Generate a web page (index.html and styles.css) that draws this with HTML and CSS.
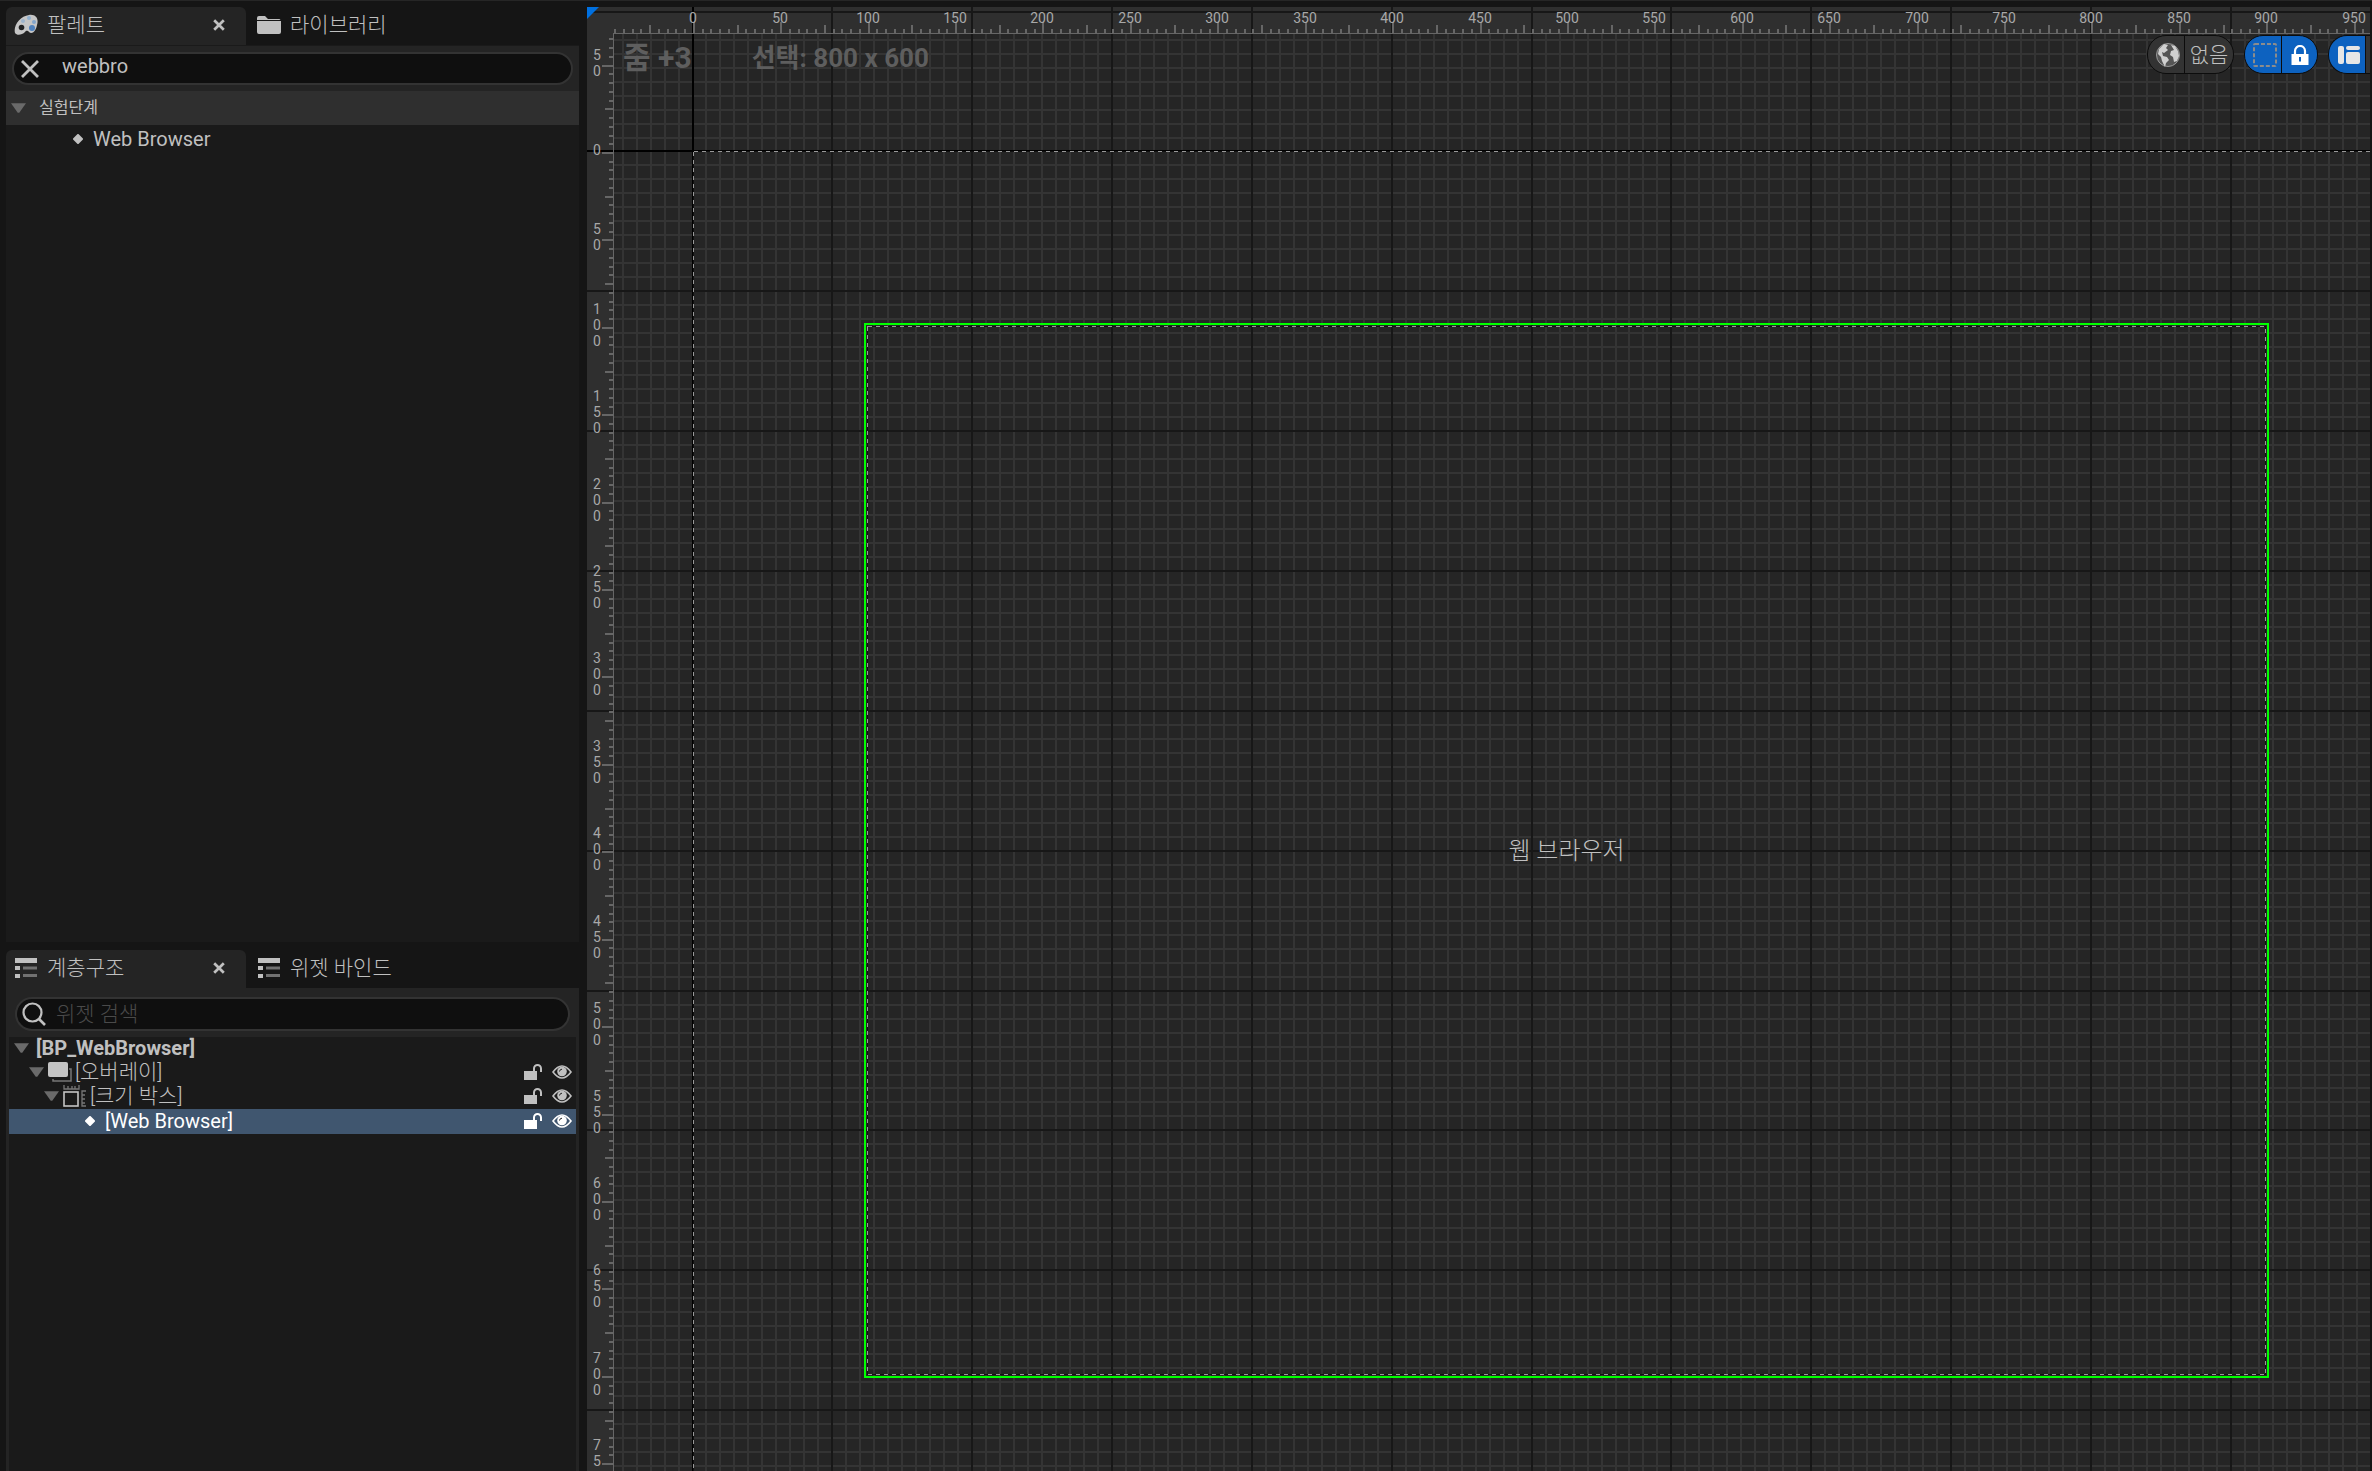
FILE: index.html
```html
<!DOCTYPE html>
<html lang="ko">
<head>
<meta charset="utf-8">
<title>BP_WebBrowser</title>
<link rel="stylesheet" href="styles.css">
</head>
<body>
<svg class="defs" aria-hidden="true">
  <symbol id="i-x" viewBox="0 0 20 20"><path d="M2 2L18 18M18 2L2 18" fill="none" stroke="currentColor" stroke-width="2.8"/></symbol>
  <symbol id="i-xb" viewBox="0 0 20 20"><path d="M2 2L18 18M18 2L2 18" fill="none" stroke="currentColor" stroke-width="4.5"/></symbol>
  <symbol id="i-tri" viewBox="0 0 16 10"><path d="M0 0H16L8.800 10H7.200Z" fill="#6a6a6a"/></symbol>
  <symbol id="i-dot" viewBox="0 0 10 10"><path d="M5 1L9 5L5 9L1 5Z" fill="currentColor" stroke="currentColor" stroke-width="2" stroke-linejoin="round"/></symbol>
  <symbol id="i-tree" viewBox="0 0 22 20"><path d="M0 0H22V5H0ZM0 8H5V12H0ZM0 16H5V20H0Z" fill="#c0c0c0"/><path d="M8 8.500H22V11.500H8ZM8 16H22V19H8Z" fill="#717171"/></symbol>
  <symbol id="i-unlock" viewBox="0 0 18 16"><path d="M0 7H13V16H0Z" fill="currentColor"/><path d="M10 8V4.500A3.500 3.500 0 0 1 17 4.500V8" fill="none" stroke="currentColor" stroke-width="2"/></symbol>
  <symbol id="i-eye" viewBox="0 0 20 14"><path d="M1 7Q10 -5 19 7Q10 19 1 7Z" fill="none" stroke="currentColor" stroke-width="1.600"/><circle cx="10" cy="6.500" r="4.800" fill="currentColor"/><path d="M7.500 6.500A2.600 2.600 0 0 1 10 4.200" fill="none" stroke="#222" stroke-width="1"/></symbol>
</svg>
<div class="editor">
  <aside class="side">
    <section class="panel palette">
      <div class="tabs">
        <div class="tab active">
          <svg class="ic" viewBox="0 0 24 22"><path d="M15 1C22 0 25 5 23 11C22 17 18 21 15 18C13 16 12 17 11 18C8 21 3 22 1 19C-1 12 6 2 15 1Z" fill="#c6c6c6"/><circle cx="7.500" cy="13.500" r="2.800" fill="#222"/><circle cx="18" cy="14" r="3" fill="#4f81bd"/><circle cx="20" cy="8" r="2" fill="#82a5cc"/><circle cx="15" cy="4" r="2" fill="#8fb0d0"/><circle cx="9" cy="7" r="2" fill="#9db4cc"/></svg>
          <span>팔레트</span>
          <button class="close" aria-label="닫기"><svg><use href="#i-xb"/></svg></button>
        </div>
        <div class="tab">
          <svg class="ic" viewBox="0 0 24 20"><path d="M0 3Q0 1 2 1H8L11 4H22Q23 4 23.500 5H0ZM0 6H24V17Q24 19 22 19H2Q0 19 0 17Z" fill="#c0c0c0"/></svg>
          <span>라이브러리</span>
        </div>
      </div>
      <div class="searchbar">
        <div class="search typed">
          <button class="clear" aria-label="지우기"><svg><use href="#i-x"/></svg></button>
          <input type="text" aria-label="팔레트 검색" value="webbro">
        </div>
      </div>
      <div class="category"><svg class="tri"><use href="#i-tri"/></svg><span>실험단계</span></div>
      <div class="item"><svg class="dot"><use href="#i-dot"/></svg><span>Web Browser</span></div>
    </section>
    <section class="panel hierarchy">
      <div class="tabs">
        <div class="tab active">
          <svg class="ic list"><use href="#i-tree"/></svg>
          <span>계층구조</span>
          <button class="close" aria-label="닫기"><svg><use href="#i-xb"/></svg></button>
        </div>
        <div class="tab">
          <svg class="ic list"><use href="#i-tree"/></svg>
          <span>위젯 바인드</span>
        </div>
      </div>
      <div class="searchbar">
        <div class="search">
          <svg class="glass" viewBox="0 0 24 24"><circle cx="10.500" cy="10.500" r="9" fill="none" stroke="#c0c0c0" stroke-width="2.200"/><path d="M17 17L23 23" stroke="#c0c0c0" stroke-width="2.600"/></svg>
          <input type="text" aria-label="위젯 검색" placeholder="위젯 검색">
        </div>
      </div>
      <div class="tree" role="tree">
        <div class="row root" role="treeitem"><svg class="tri"><use href="#i-tri"/></svg><span>[BP_WebBrowser]</span></div>
        <div class="row l1" role="treeitem"><svg class="tri"><use href="#i-tri"/></svg>
          <svg class="wic" viewBox="0 0 24 20"><path d="M21 7H23V19H5V17" fill="none" stroke="#777" stroke-width="1.500"/><rect width="20" height="15" rx="2" fill="#c4c4c4"/></svg>
          <span>[오버레이]</span>
          <button aria-label="잠금"><svg class="lock"><use href="#i-unlock"/></svg></button><button aria-label="표시"><svg class="eye"><use href="#i-eye"/></svg></button></div>
        <div class="row l2" role="treeitem"><svg class="tri"><use href="#i-tri"/></svg>
          <svg class="wic tall" viewBox="0 0 24 22"><path d="M1 0V4H16V0M5 1V4M9 1V4M12 1V4M23 6H19V21H23M19 10H22M19 14H22M19 18H22" fill="none" stroke="#777" stroke-width="1.300"/><rect x="1" y="7" width="14" height="14" fill="none" stroke="#c4c4c4" stroke-width="1.600"/></svg>
          <span>[크기 박스]</span>
          <button aria-label="잠금"><svg class="lock"><use href="#i-unlock"/></svg></button><button aria-label="표시"><svg class="eye"><use href="#i-eye"/></svg></button></div>
        <div class="row l3 selected" role="treeitem" aria-selected="true"><svg class="dot"><use href="#i-dot"/></svg>
          <span>[Web Browser]</span>
          <button aria-label="잠금"><svg class="lock"><use href="#i-unlock"/></svg></button><button aria-label="표시"><svg class="eye"><use href="#i-eye"/></svg></button></div>
      </div>
    </section>
  </aside>
  <main class="designer">
    <svg class="surface" id="surface"></svg>
    <div class="overlay">
      <div class="info"><span>줌 +3</span><span>선택: 800 x 600</span></div>
      <div class="tools">
        <div class="pill gray">
          <button aria-label="현지화"><svg width="24" height="26" viewBox="0 0 24 26"><circle cx="12" cy="13" r="11.500" fill="#555" stroke="#999"/><path d="M3 7L8 2L12 3L10 6L12 8L8 11L6 10L7 14L11 15L13 18L10 21L9 25L6 19L5 15L2 12ZM15 3L19 4L22 9L23 14L21 19L18 20L17 15L14 13L15 9L18 8Z" fill="#d0d0d0"/></svg></button>
          <button class="none">없음</button>
        </div>
        <div class="pill blue">
          <button aria-label="점선 표시"><svg width="24" height="24" viewBox="0 0 24 24"><rect x="1" y="1" width="22" height="22" rx="1" fill="none" stroke="#8c8c8c" stroke-width="2" stroke-dasharray="4 2"/></svg></button>
          <button aria-label="잠금 준수"><svg width="18" height="20" viewBox="0 0 18 20"><path d="M4 10V6A5 5 0 0 1 14 6V10" fill="none" stroke="#fff" stroke-width="2.200"/><path d="M0.500 9H17.500V20H0.500ZM8 12V16.500H10V12Z" fill="#fff" fill-rule="evenodd"/></svg></button>
        </div>
        <div class="pill blue cut">
          <button aria-label="레이아웃"><svg width="22" height="20" viewBox="0 0 22 20"><g fill="#e6e6e6"><rect y="1" width="6" height="18" rx="2"/><rect x="8" y="1" width="14" height="4" rx="2"/><rect x="8" y="7" width="14" height="12" rx="2"/></g></svg></button>
          <button class="more" aria-label="더 보기"></button>
        </div>
      </div>
    </div>
    <div class="widget"><span>웹 브라우저</span></div>
  </main>
</div>
<script src="designer.js"></script>
</body>
</html>
```
FILE: styles.css
```css
* { box-sizing: border-box; }
body {
  margin: 0;
  background: #151515;
  color: #c0c0c0;
  font: 20px/24px Roboto, "Noto Sans CJK KR", sans-serif;
  overflow: hidden;
}
button {
  flex: none;
  padding: 0;
  border: 0;
  background: none;
  color: inherit;
  font: inherit;
  display: flex;
  align-items: center;
  justify-content: center;
}
svg { display: block; flex: none; }
.defs { position: absolute; width: 0; height: 0; }

.editor {
  display: grid;
  grid-template-columns: 573px minmax(0, 1fr);
  gap: 8px;
  height: 100vh;
  padding: 6px 2px 0 6px;
  border-top: 1px solid #262626;
}
.side {
  display: grid;
  grid-template-rows: 935px minmax(0, 1fr);
  gap: 8px;
  min-height: 0;
}
.panel { display: flex; flex-direction: column; min-height: 0; }
.palette { background: #1a1a1a; }
.tabs { display: flex; height: 38px; flex: none; background: #151515; }
.tab {
  display: flex;
  align-items: center;
  gap: 9px;
  padding: 0 21px 2px 8px;
  font-size: 21px;
  font-weight: 300;
}
.tab.active {
  width: 240px;
  background: #242424;
  border-radius: 6px 6px 0 0;
}
.tab + .tab { padding-left: 11px; }
.ic { width: 24px; height: 22px; }
.ic.list { width: 22px; height: 20px; margin: 0 1px; }
.close { margin-left: auto; }
.close svg { width: 12px; height: 12px; }

.searchbar { background: #242424; flex: none; }
.palette .searchbar { padding: 6px 6px 6px; border-top: 1px solid #1a1a1a; }
.hierarchy .searchbar { padding: 9px 9px 6px; }
.search {
  display: flex;
  align-items: center;
  height: 34px;
  border: 2px solid #333;
  border-radius: 17px;
  background: #0f0f0f;
}
.palette .search { height: 33px; }
.search input {
  flex: 1;
  min-width: 0;
  border: 0;
  outline: 0;
  padding: 0;
  background: none;
  color: #c0c0c0;
  font: inherit;
  font-size: 21px;
  font-weight: 300;
}
.search.typed input { font-size: 20px; font-weight: 400; padding-bottom: 5px; }
.search input::placeholder { color: #4a4a4a; opacity: 1; }
.clear { margin: 0 22px 0 6px; }
.clear svg { width: 20px; height: 20px; }
.glass { width: 24px; height: 24px; margin: 0 10px 0 5px; }

.category {
  display: flex;
  align-items: center;
  gap: 13px;
  height: 34px;
  padding-left: 5px;
  background: #2f2f2f;
  font-size: 16px;
}
.tri { width: 15px; height: 10px; }
.dot { width: 10px; height: 10px; }
.item {
  display: flex;
  align-items: center;
  gap: 10px;
  height: 28px;
  padding-left: 67px;
}

.hierarchy { background: #242424; }
.tree { flex: 1; margin: 0 3px; background: #1a1a1a; }
.row { display: flex; align-items: center; height: 24px; padding: 0 4px 2px 0; }
.row span { flex: 1; font-size: 21px; font-weight: 300; }
.row.root span { font-size: 20px; font-weight: 700; }
.row .tri { margin-right: 7px; }
.root { padding-left: 5px; }
.l1 { padding-left: 20px; }
.l2 { padding-left: 35px; }
.l1 .tri, .l2 .tri { margin-right: 4px; }
.l3 { padding-left: 76px; }
.l3 .dot { margin-right: 10px; }
.wic { width: 24px; height: 20px; margin-right: 3px; }
.wic.tall { height: 22px; }
.lock { width: 18px; height: 18px; margin-right: 10px; }
.eye { width: 20px; height: 14px; }
.row.selected { height: 25px; background: #40566f; color: #fff; }
.row.selected span { font-size: 20px; font-weight: 400; }

.designer {
  display: grid;
  min-width: 0;
  min-height: 0;
  overflow: hidden;
  background: #252525;
}
.surface, .overlay, .widget { grid-area: 1 / 1; }
.surface { width: 100%; height: 100%; min-height: 0; }
.surface text { font: 14px Roboto, sans-serif; fill: #a8a8a8; text-anchor: middle; }
.overlay {
  display: flex;
  justify-content: space-between;
  align-items: flex-start;
  padding: 28px 0 0 36px;
}
.info {
  display: flex;
  gap: 60px;
  font-size: 30px;
  line-height: 46px;
  font-weight: 700;
  color: #5e5e5e;
}
.info span + span { font-size: 26px; }
.tools { display: flex; gap: 10px; }
.pill {
  display: flex;
  height: 39px;
  border: 1px solid #0c0c0c;
  border-radius: 19px;
  overflow: hidden;
}
.pill button { height: 100%; width: 35px; }
.pill button:first-child { width: 37px; border-right: 1px solid #0c0c0c; padding-left: 4px; }
.gray { background: #333; }
.pill .none { width: 48px; font-size: 21px; font-weight: 300; }
.blue { background: #0d62c0; }
.cut { width: 42px; border-radius: 19px 0 0 19px; border-right: 0; }
.cut .more { background: #333; }
.widget {
  align-self: start;
  display: flex;
  align-items: center;
  justify-content: center;
  width: 1405px;
  height: 1055px;
  margin: 316px 0 0 277px;
  border: 2px solid #00ff00;
  font-size: 24px;
  font-weight: 300;
}
```
FILE: designer.js
```js
const SCALE = 1.7483;
const CELL = 13.985;
const RULER = 26;
const svg = document.getElementById('surface');

function rect(x, y, w, h, fill) {
  return `<rect x="${x}" y="${y}" width="${w}" height="${h}" fill="${fill}"/>`;
}

function draw() {
  const W = svg.clientWidth, H = svg.clientHeight;
  let grid = '', major = '', ruler = '', labels = '';
  const ox = 105, oy = 144;

  for (let i = -12; i * CELL + ox < W; i++) {
    const x = Math.floor(ox + i * CELL);
    if (i % 10) grid += rect(x, 0, 2, H, '#343434');
    else if (i) major += rect(x, 0, 2, H, '#171717');
  }
  for (let i = -12; i * CELL + oy < H; i++) {
    const y = Math.floor(oy + i * CELL);
    if (i % 10) grid += rect(0, y, W, 2, '#343434');
    else if (i) major += rect(0, y, W, 2, '#171717');
  }
  major += rect(105, 0, 2, H, '#000') + rect(0, 143, W, 2, '#000');

  const size = u => (u % 50 === 0 ? 11 : u % 25 === 0 ? 8 : 4);
  for (let u = -100; u < 1200; u += 5) {
    const x = Math.floor(106.3 + u * SCALE), y = Math.floor(145.5 + u * SCALE), t = size(u);
    if (x > RULER && x < W) ruler += rect(x, RULER - t, 2, t, '#666');
    if (y > RULER && y < H) ruler += rect(RULER - t, y, t, 2, '#666');
    if (u % 50 === 0) {
      const s = String(Math.abs(u));
      if (x > RULER && x < W) labels += `<text x="${x}" y="16">${s}</text>`;
      if (y > RULER) [...s].forEach((c, k) => {
        const base = y + 3 - (s.length - 1) * 8 + k * 16;
        if (base < H) labels += `<text x="10" y="${base}">${c}</text>`;
      });
    }
  }

  const dash = (d, c) => `<path d="${d}" fill="none" stroke="${c}"/>`;
  const dashed = d => dash(d, '#111') +
    `<path d="${d}" fill="none" stroke="#999" stroke-dasharray="4 4"/>`;

  svg.innerHTML = `<g shape-rendering="crispEdges">
    ${grid}${rect(0, 0, W, RULER, '#2f2f2f')}${rect(0, 0, RULER, H, '#2f2f2f')}
    ${major}
    ${dashed(`M106.500 144.500H${W}`)}${dashed(`M106.500 144.500V${H}`)}
    ${dashed('M280.500 319.500H1678.500V1367.500H280.500Z')}
    ${ruler}${rect(RULER, RULER, W, 1, '#666')}${rect(RULER, RULER, 1, H, '#666')}
    </g><path d="M0 0H12L0 12Z" fill="#0070e0"/>${labels}`;
}
draw();
addEventListener('resize', draw);
```
